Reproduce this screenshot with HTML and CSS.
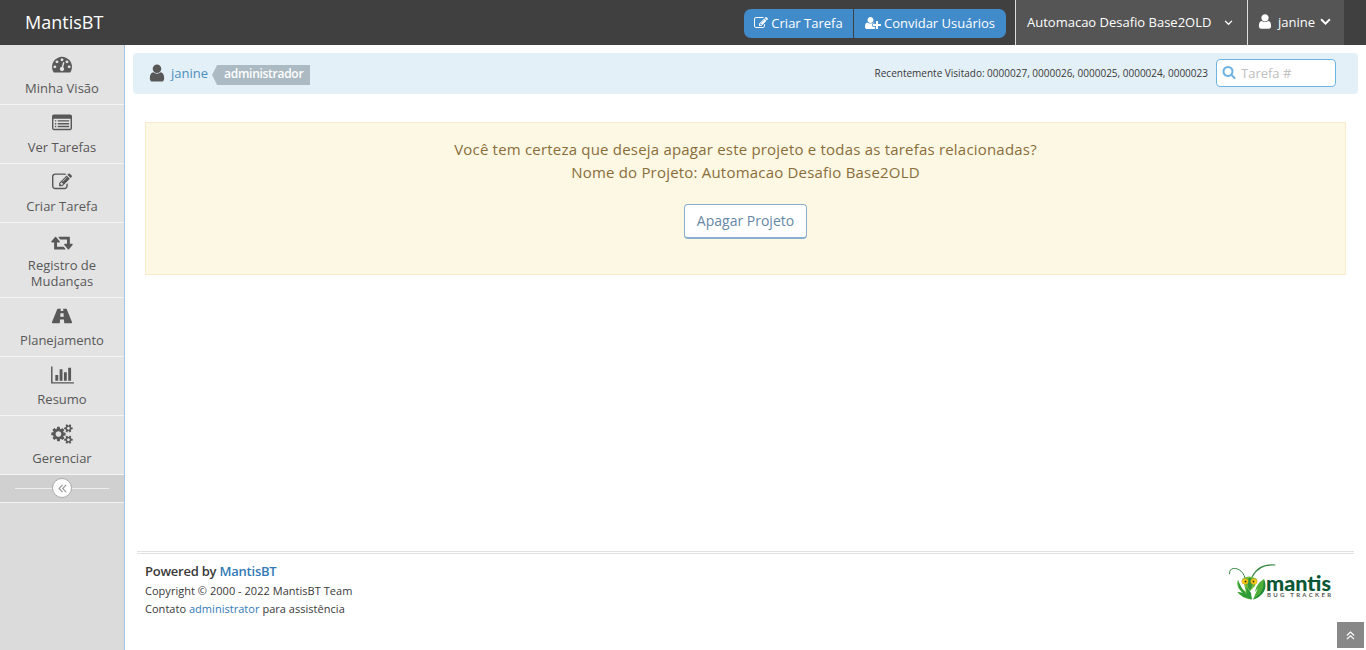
FILE: index.html
```html
<!DOCTYPE html>
<html lang="pt-BR">
<head>
<meta charset="utf-8">
<title>MantisBT</title>
<link rel="stylesheet" href="styles.css">
</head>
<body>
<svg class="sprite" aria-hidden="true">
  <symbol id="user" viewBox="0 0 1792 1792"><path d="M1536 1399q0 109-62.5 187t-150.5 78h-854q-88 0-150.5-78t-62.5-187q0-85 8.5-160.5t31.5-152 58.5-131 94-89 134.5-34.5q131 128 313 128t313-128q76 0 134.5 34.5t94 89 58.5 131 31.5 152 8.5 160.5zm-256-887q0 159-112.5 271.5t-271.5 112.5-271.5-112.5-112.5-271.5 112.5-271.5 271.5-112.5 271.5 112.5 112.5 271.5z"/></symbol>
  <symbol id="edit" viewBox="0 0 1792 1792"><path d="M888 1184l116-116-152-152-116 116v56h96v96h56zm440-720q-16-16-33 1l-350 350q-17 17-1 33t33-1l350-350q17-17 1-33zm80 594v190q0 119-84.5 203.5t-203.5 84.5h-832q-119 0-203.5-84.5t-84.5-203.5v-832q0-119 84.5-203.5t203.5-84.5h832q63 0 117 25 15 7 18 23 3 17-9 29l-49 49q-14 14-32 8-23-6-45-6h-832q-66 0-113 47t-47 113v832q0 66 47 113t113 47h832q66 0 113-47t47-113v-126q0-13 9-22l64-64q15-15 35-7t20 29zm-96-738l288 288-672 672h-288v-288zm444 132l-92 92-288-288 92-92q28-28 68-28t68 28l152 152q28 28 28 68t-28 68z"/></symbol>
</svg>
<header class="navbar">
  <a class="brand">MantisBT</a>
  <div class="nav-right">
    <div class="btn-group">
      <a class="btn-blue"><svg class="i14"><use href="#edit"/></svg>Criar Tarefa</a>
      <a class="btn-blue invite"><svg class="i-invite" viewBox="0 0 2048 1792"><path d="M704 896q-159 0-271.5-112.5t-112.5-271.5 112.5-271.5 271.5-112.5 271.5 112.5 112.5 271.5-112.5 271.5-271.5 112.5zm960 128h352q13 0 22.5 9.5t9.5 22.5v192q0 13-9.5 22.5t-22.5 9.5h-352v352q0 13-9.5 22.5t-22.5 9.5h-192q-13 0-22.5-9.5t-9.5-22.5v-352h-352q-13 0-22.5-9.5t-9.5-22.5v-192q0-13 9.5-22.5t22.5-9.5h352v-352q0-13 9.5-22.5t22.5-9.5h192q13 0 22.5 9.5t9.5 22.5v352zm-736 224q0 52 38 90t90 38h256v238q-68 50-171 50h-874q-121 0-194-69t-73-190q0-53 3.5-103.5t14-109 26.5-108.5 43-97.5 62-81 85.5-53.5 111.5-20q19 0 39 17 79 61 154.5 91.5t164.5 30.5 164.5-30.5 154.5-91.5q20-17 39-17 132 0 217 96h-223q-52 0-90 38t-38 90v192z"/></svg>Convidar Usuários</a>
    </div>
    <a class="drop project">Automacao Desafio Base2OLD<svg class="chev small" viewBox="0 0 10 7"><path d="M1 1l4 4 4-4"/></svg></a>
    <a class="drop account"><svg class="i-user"><use href="#user"/></svg>janine<svg class="chev" viewBox="0 0 10 7"><path d="M1 1l4 4 4-4"/></svg></a>
  </div>
</header>
<div class="body">
  <nav class="sidebar">
    <a class="item"><svg class="i20" viewBox="0 0 1792 1792"><path d="M384 1152q0-53-37.500-90.500t-90.500-37.500-90.500 37.500-37.500 90.500 37.500 90.500 90.500 37.500 90.500-37.500 37.500-90.500zm192-448q0-53-37.500-90.500t-90.500-37.500-90.500 37.500-37.500 90.500 37.500 90.500 90.500 37.500 90.500-37.500 37.500-90.500zm428 481l101-382q6-26-7.500-48.500t-38.500-29.500-48 6.500-30 39.500l-101 382q-60 5-107 43.500t-63 98.500q-20 77 20 146t117 89 146-20 89-117q16-60-6-117t-72-91zm660-33q0-53-37.500-90.500t-90.500-37.500-90.500 37.500-37.500 90.500 37.500 90.500 90.500 37.500 90.500-37.500 37.500-90.500zm-640-640q0-53-37.500-90.500t-90.500-37.500-90.500 37.500-37.500 90.500 37.500 90.500 90.500 37.500 90.500-37.500 37.500-90.500zm448 192q0-53-37.500-90.500t-90.500-37.500-90.500 37.500-37.500 90.500 37.500 90.500 90.500 37.500 90.500-37.500 37.500-90.500zm320 448q0 261-141 483-19 29-54 29h-1402q-35 0-54-29-141-221-141-483 0-182 71-348t191-286 286-191 348-71 348 71 286 191 191 286 71 348z"/></svg><span>Minha Visão</span></a>
    <a class="item"><svg class="i20" viewBox="0 0 1792 1792"><path fill-rule="evenodd" d="M160 128h1472q160 0 160 160v1088q0 160-160 160h-1472q-160 0-160-160v-1088q0-160 160-160zm-32 416v832q0 32 32 32h1472q32 0 32-32v-832q0-32-32-32h-1472q-32 0-32 32zM256 640h128v128h-128zM512 640h1024v128h-1024zM256 896h128v128h-128zM512 896h1024v128h-1024zM256 1152h128v128h-128zM512 1152h1024v128h-1024z"/></svg><span>Ver Tarefas</span></a>
    <a class="item"><svg class="i20"><use href="#edit"/></svg><span>Criar Tarefa</span></a>
    <a class="item"><svg class="i20 w1920" viewBox="0 0 1920 1792"><path d="M1280 1632q0 13-9.500 22.500t-22.500 9.500h-960q-8 0-13.500-2t-9-7-5.500-8-3-11.500-1-11.500v-600h-192q-26 0-45-19t-19-45q0-24 15-41l320-384q19-22 49-22t49 22l320 384q15 17 15 41 0 26-19 45t-45 19h-192v384h576q16 0 25 11l160 192q7 10 7 21zm640-416q0 24-15 41l-320 384q-20 23-49 23t-49-23l-320-384q-15-17-15-41 0-26 19-45t45-19h192v-384h-576q-16 0-25-12l-160-192q-7-9-7-20 0-13 9.500-22.500t22.500-9.500h960q8 0 13.500 2t9 7 5.500 8 3 11.500 1 11.500v600h192q26 0 45 19t19 45z"/></svg><span>Registro de Mudanças</span></a>
    <a class="item"><svg class="i20 w1920" viewBox="0 0 1920 1792"><path fill-rule="evenodd" d="M585 256h270l-16 192h242l-16-192h270q40 0 56 40l462 1140q44 100-44 100h-648l-26-320h-350l-26 320h-648q-88 0-44-100l462-1140q16-40 56-40zM824 640l-24 320h320l-24-320z"/></svg><span>Planejamento</span></a>
    <a class="item"><svg class="i20 w2048" viewBox="0 0 2048 1792"><path d="M640 896v512h-256v-512h256zm384-512v1024h-256v-1024h256zm1024 1152v128h-2048v-1536h128v1408h1920zm-640-896v768h-256v-768h256zm384-384v1152h-256v-1152h256z"/></svg><span>Resumo</span></a>
    <a class="item"><svg class="i20 w1920" viewBox="0 0 1920 1792"><path d="M896 896q0-106-75-181t-181-75-181 75-75 181 75 181 181 75 181-75 75-181zm768 512q0-52-38-90t-90-38-90 38-38 90q0 53 37.500 90.500t90.500 37.500 90.500-37.500 37.500-90.500zm0-1024q0-52-38-90t-90-38-90 38-38 90q0 53 37.500 90.500t90.500 37.500 90.500-37.500 37.500-90.500zm-384 421v185q0 10-7 19.500t-16 10.500l-155 24q-11 35-32 76 34 48 90 115 7 11 7 20 0 12-7 19-23 30-82.500 89.500t-78.500 59.500q-11 0-21-7l-115-90q-37 19-77 31-11 108-23 155-7 24-30 24h-186q-11 0-20-7.500t-10-17.500l-23-153q-34-10-75-31l-118 89q-7 7-20 7-11 0-21-8-144-133-144-160 0-9 7-19 10-14 41-53t47-61q-23-44-35-82l-152-24q-10-1-17-9.500t-7-19.500v-185q0-10 7-19.500t16-10.500l155-24q11-35 32-76-34-48-90-115-7-11-7-20 0-12 7-20 22-30 82-89t79-59q11 0 21 7l115 90q34-18 77-32 11-108 23-154 7-24 30-24h186q11 0 20 7.500t10 17.500l23 153q34 10 75 31l118-89q8-7 20-7 11 0 21 8 144 133 144 160 0 8-7 19-12 16-42 54t-45 60q23 48 34 82l152 23q10 2 17 10.500t7 19.500zm640 533v140q0 16-149 31-12 27-30 52 51 113 51 138 0 4-4 7-122 71-124 71-8 0-46-47t-52-68q-20 2-30 2t-30-2q-14 21-52 68t-46 47q-2 0-124-71-4-3-4-7 0-25 51-138-18-25-30-52-149-15-149-31v-140q0-16 149-31 13-29 30-52-51-113-51-138 0-4 4-7 4-2 35-20t59-34 30-16q8 0 46 46.500t52 67.500q20-2 30-2t30 2q51-71 92-112l6-2q4 0 124 70 4 3 4 7 0 25-51 138 17 23 30 52 149 15 149 31zm0-1024v140q0 16-149 31-12 27-30 52 51 113 51 138 0 4-4 7-122 71-124 71-8 0-46-47t-52-68q-20 2-30 2t-30-2q-14 21-52 68t-46 47q-2 0-124-71-4-3-4-7 0-25 51-138-18-25-30-52-149-15-149-31v-140q0-16 149-31 13-29 30-52-51-113-51-138 0-4 4-7 4-2 35-20t59-34 30-16q8 0 46 46.500t52 67.500q20-2 30-2t30 2q51-71 92-112l6-2q4 0 124 70 4 3 4 7 0 25-51 138 17 23 30 52 149 15 149 31z"/></svg><span>Gerenciar</span></a>
    <div class="collapse"><i class="line"></i><span class="knob"><svg viewBox="0 0 10 10"><path d="M5 1L1.200 5L5 9M9 1L5.200 5L9 9"/></svg></span><i class="line"></i></div>
  </nav>
  <main class="main">
    <div class="crumbs">
      <svg class="i-crumb"><use href="#user"/></svg><a class="who">janine</a><span class="role">administrador</span>
      <span class="recent">Recentemente Visitado: 0000027, 0000026, 0000025, 0000024, 0000023</span>
      <label class="search"><svg viewBox="0 0 1792 1792"><path d="M1216 832q0-185-131.500-316.500t-316.500-131.500-316.500 131.500-131.500 316.500 131.500 316.500 316.500 131.500 316.500-131.500 131.500-316.500zm512 832q0 52-38 90t-90 38q-54 0-90-38l-343-342q-179 124-399 124-143 0-273.500-55.500t-225-150-150-225-55.500-273.500 55.500-273.500 150-225 225-150 273.500-55.500 273.500 55.500 225 150 150 225 55.500 273.500q0 220-124 399l343 343q37 37 37 90z"/></svg><input type="text" placeholder="Tarefa #"></label>
    </div>
    <section class="warning">
      <p>Você tem certeza que deseja apagar este projeto e todas as tarefas relacionadas?</p>
      <p>Nome do Projeto: Automacao Desafio Base2OLD</p>
      <button class="btn-white">Apagar Projeto</button>
    </section>
    <footer class="footer">
      <div>
        <div class="powered">Powered by <a>MantisBT</a></div>
        <div class="small-text">Copyright © 2000 - 2022 MantisBT Team</div>
        <div class="small-text">Contato <a>administrator</a> para assistência</div>
      </div>
      <svg class="logo" viewBox="0 0 104 36">
        <g fill="none" stroke="#3b8a45" stroke-linecap="round"><path d="M17 14C15 6 8 3 3.500 5Q1 6.500 1.500 10" stroke-width="1"/><path d="M24 13C28 5 36 0 47 1" stroke-width="1.100"/></g>
        <path fill="#5db83a" d="M10 16C8 20 10 25 15 29L9.500 28C12 32 17 34.500 23 35.500L20 26L16 20L18 28C14 25 11 21 10 16z"/>
        <path fill="#2f9a3a" d="M10 16L14 25L19 31L18 21L23 29L24 35.500L16 33L9.500 28L15 29L11 24z"/>
        <path fill="#4fae38" d="M36 15C31 18 28 22 27 28L30 24L25 35.500C32 34 37 28 36 15z"/>
        <path fill="#1e8a3a" d="M36 15C40 24 36 32 25 35.500L32 30L35 24z"/>
        <path fill="#71bd35" d="M14 15Q21 10 29 15L27 22L22 27L17 22z"/>
        <path fill="#35963a" d="M20.500 14h2.500l1 8l-2 5l-2.500-5z"/>
        <g fill="#ffd21c" stroke="#c38e12" stroke-width=".5"><ellipse cx="17" cy="17.500" rx="3.200" ry="2.700"/><ellipse cx="26" cy="17.500" rx="3.200" ry="2.700"/></g>
        <circle cx="17.500" cy="17.500" r="1" fill="#3d3510"/><circle cx="25.500" cy="17.500" r="1" fill="#3d3510"/>
        <text class="logo-name" x="38" y="26.500" textLength="65" lengthAdjust="spacingAndGlyphs">mantis</text>
        <text class="logo-sub" x="39" y="32.500" textLength="64">BUG TRACKER</text>
      </svg>
    </footer>
  </main>
</div>
<a class="to-top"><svg viewBox="0 0 10 10"><path d="M1 5L5 1.300L9 5M1 9L5 5.300L9 9"/></svg></a>
</body>
</html>
```
FILE: styles.css
```css
* { box-sizing: border-box; }
body { margin: 0; height: 650px; overflow: hidden; font-family: "Open Sans", sans-serif; font-size: 13px; line-height: 20px; color: #393939; background: #fff; display: flex; flex-direction: column; }
svg { fill: currentColor; flex: none; }
.sprite { position: absolute; width: 0; height: 0; }
.navbar { height: 45px; flex: none; background: #404040; color: #fff; display: flex; justify-content: space-between; padding: 0 22px 0 25px; }
.brand { font-size: 18px; line-height: 45px; }
.nav-right { display: flex; align-items: stretch; }
.btn-group { display: flex; gap: 1px; align-self: center; height: 29px; margin: 1px 9px 0 0; }
.btn-blue { width: 109px; display: flex; align-items: center; justify-content: center; gap: 3px; background: #428bca; border-radius: 7px 0 0 7px; white-space: nowrap; }
.btn-blue.invite { width: 152px; border-radius: 0 7px 7px 0; }
.i14 { width: 14px; height: 14px; }
.i-invite { width: 16px; height: 14px; }
.drop { display: flex; align-items: center; background: #555; border-left: 1px solid #ddd; white-space: nowrap; }
.project { width: 232px; padding: 0 0 1px 11px; gap: 13px; }
.account { width: 97px; padding: 0 0 1px 10px; }
.i-user { width: 18px; height: 17px; margin: 0 4px 1px -2px; }
.chev { width: 11px; height: 8px; fill: none; stroke: #fff; stroke-width: 1.700; margin-left: 5px; }
.chev.small { width: 9px; height: 6px; margin: 1px 0 0; stroke-width: 1.500; }
.body { flex: 1; display: flex; min-height: 0; }
.sidebar { width: 125px; flex: none; background: #dbdbdb; border-right: 1px solid #9fc5dd; }
.item { display: flex; flex-direction: column; align-items: center; background: #e3e3e3; border-bottom: 1px solid #f5f5f5; color: #585858; text-align: center; padding: 8px 8px 8px; line-height: 16px; }
.item:first-child { padding-top: 9px; }
.item span { width: 90px; }
.i20 { width: 20px; height: 20px; margin-bottom: 6px; }
.i20.w1920 { width: 22px; }
.i20.w2048 { width: 23px; }
.collapse { height: 28px; display: flex; align-items: center; padding: 0 15px 1px; background: #d0d0d0; border-bottom: 1px solid #f3f3f3; }
.line { flex: 1; height: 1px; background: #eee; }
.knob { width: 20px; height: 20px; border: 1px solid #aaa; border-radius: 50%; background: #fff; color: #999; display: grid; place-items: center; }
.knob svg { width: 9px; height: 9px; fill: none; stroke: currentColor; stroke-width: 1.300; }
.main { flex: 1; min-width: 0; display: flex; flex-direction: column; padding: 8px 8px 0; }
.crumbs { height: 41px; flex: none; background: #e4f0f7; border-radius: 4px; display: flex; align-items: center; padding: 0 22px 1px 15px; }
.i-crumb { width: 20px; height: 20px; color: #585858; margin: 0 0 1px -1px; }
.who { color: #4c8fbd; margin-left: 4px; }
.role { margin: 4px 0 0 4px; height: 20px; line-height: 18px; padding: 0 7px 0 12px; background: #abbac3; color: #fff; font-size: 12px; font-weight: 600; letter-spacing: -.28px; clip-path: polygon(0 50%, 5px 0, 100% 0, 100% 100%, 5px 100%); }
.recent { margin-left: auto; font-size: 10px; white-space: nowrap; }
.search { width: 120px; height: 28px; margin-left: 8px; border: 1px solid #6fb3e0; border-radius: 4px; background: #fff; display: flex; align-items: center; padding-left: 5px; color: #6fb3e0; }
.search svg { width: 14px; height: 14px; margin-top: -2px; }
.search input { border: 0; outline: 0; background: none; padding: 0; margin-left: 5px; width: 85px; font: 13px "Open Sans", sans-serif; }
.search input::placeholder { color: #c0c0c0; opacity: 1; }
.warning { margin: 28px 12px 0; height: 153px; border: 1px solid #faebcc; background: #fcf8e3; color: #8a6d3b; font-size: 15px; line-height: 23px; padding-top: 15px; display: flex; flex-direction: column; align-items: center; }
.warning p { margin: 0; letter-spacing: .2px; }
.btn-white { margin-top: 20px; width: 123px; height: 35px; padding: 0 0 2px; border: 1px solid #8aafce; border-bottom-width: 2px; border-radius: 4px; background: #fff; color: #6688a6; font: 14px "Open Sans", sans-serif; }
.footer { margin: auto 4px 0; height: 99px; border-top: 3px double #e0e0e0; padding: 6px 22px 0 8px; display: flex; justify-content: space-between; }
.powered { font-weight: 600; line-height: 22px; letter-spacing: -.23px; }
.footer a { color: #337ab7; }
.small-text { font-size: 11px; line-height: 18px; letter-spacing: .03px; }
.logo { width: 104px; height: 36px; margin-top: 4px; overflow: visible; }
.logo-name { font: 900 21px Lato, sans-serif; fill: #0b5735; }
.logo-sub { font: 700 6px Lato, sans-serif; fill: #555; }
.to-top { position: absolute; right: 2px; bottom: 2px; width: 27px; height: 26px; background: #888; display: grid; place-items: center; }
.to-top svg { width: 9px; height: 9px; fill: none; stroke: #fff; stroke-width: 1.300; }
```
